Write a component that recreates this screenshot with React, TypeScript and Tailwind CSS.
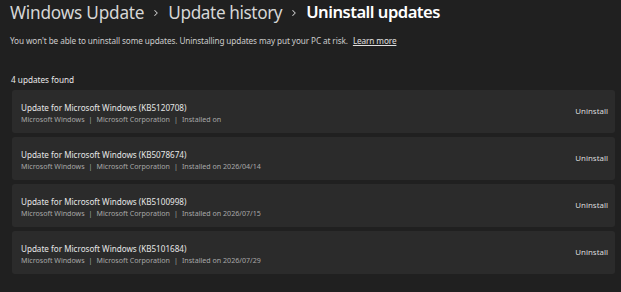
import { ChevronRight } from "lucide-react";

type Update = {
  kb: string;
  installed: string;
};

const updates: Update[] = [
  { kb: "KB5120708", installed: "" },
  { kb: "KB5078674", installed: "2026/04/14" },
  { kb: "KB5100998", installed: "2026/07/15" },
  { kb: "KB5101684", installed: "2026/07/29" },
];

export default function App() {
  return (
    <div
      className="w-[621px] h-[292px] bg-[#202020] text-white overflow-hidden"
      style={{ fontFamily: '"Noto Sans", "Open Sans", sans-serif' }}
    >
      {/* Breadcrumb */}
      <div className="flex items-center pl-[10px] pt-[1px] h-[24px] text-[17.2px] leading-none tracking-[-0.2px]">
        <span className="text-[#d6d6d6]">Windows Update</span>
        <ChevronRight className="w-[10px] h-[10px] mx-[7px] text-[#cfcfcf]" strokeWidth={2.5} />
        <span className="text-[#d6d6d6] tracking-[-0.4px]">Update history</span>
        <ChevronRight className="w-[10px] h-[10px] mx-[7px] text-[#cfcfcf]" strokeWidth={2.5} />
        <span className="font-semibold text-white text-[16.6px] tracking-[-0.5px]">Uninstall updates</span>
      </div>

      <p className="pl-[10px] mt-[11px] text-[8.2px] text-[#cccccc] tracking-[-0.1px]">
        You won't be able to uninstall some updates. Uninstalling updates may put your PC at risk.{" "}
        <span className="ml-[3px] underline text-[#e0e0e0]">Learn more</span>
      </p>

      <div className="pl-[11px] mt-[27px] text-[8.2px] leading-[12px] text-[#e8e8e8]">
        {updates.length} updates found
      </div>

      {/* Lista de updates */}
      <div className="mt-[4px] ml-[12px] mr-[6px] flex flex-col gap-[4px]">
        {updates.map((u) => (
          <div
            key={u.kb}
            className="h-[43px] bg-[#2b2b2b] rounded-[3px] flex items-center justify-between pl-[9px] pr-[7px]"
          >
            <div className="flex flex-col mt-[3px]">
              <span className="text-[8.1px] leading-[12px] text-[#e6e6e6]">
                Update for Microsoft Windows ({u.kb})
              </span>
              <span className="text-[7.1px] leading-[11px] text-[#a8a8a8] flex gap-[4px]">
                <span>Microsoft Windows</span>
                <span>|</span>
                <span>Microsoft Corporation</span>
                <span>|</span>
                <span>Installed on{u.installed ? ` ${u.installed}` : ""}</span>
              </span>
            </div>
            <span className="text-[7.9px] text-[#dcdcdc]">Uninstall</span>
          </div>
        ))}
      </div>
    </div>
  );
}
